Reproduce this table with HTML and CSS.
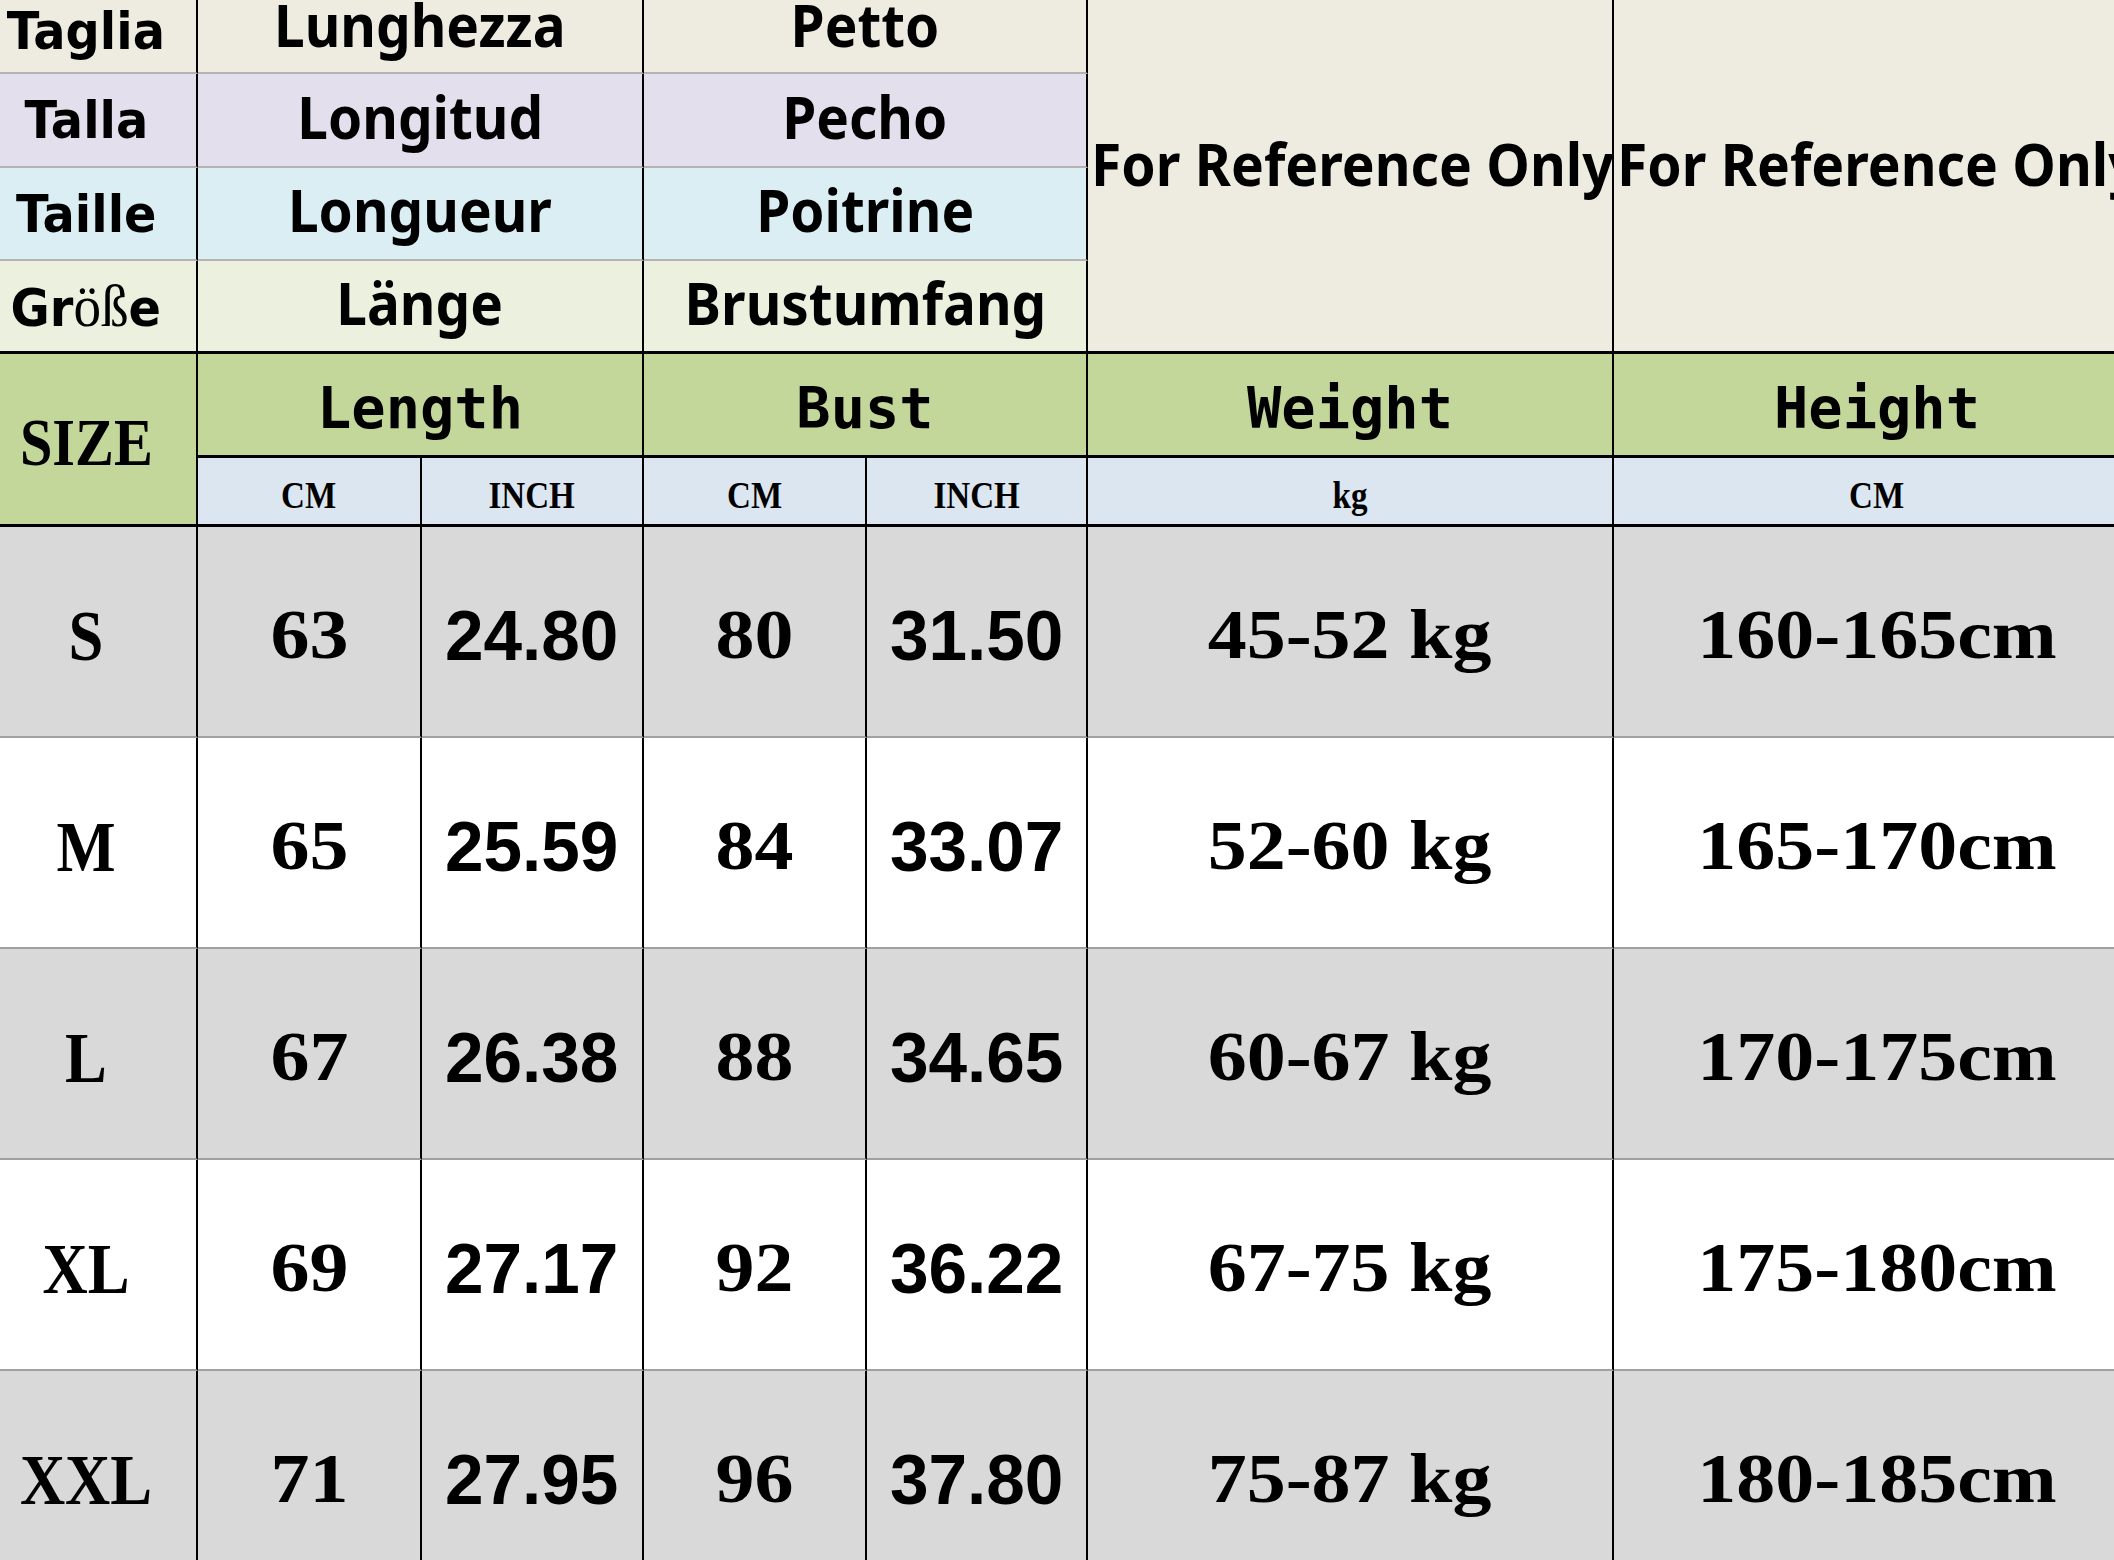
FILE: index.html
```html
<!DOCTYPE html>
<html lang="en">
<head>
<meta charset="utf-8">
<title>Size Chart</title>
<link rel="stylesheet" href="styles.css">
</head>
<body>
<div class="chart">
  <div class="c lang l1 c1"><span class="lbl">Taglia</span></div>
  <div class="c lang l1 span2"><span class="ml">Lunghezza</span></div>
  <div class="c lang l1 span2"><span class="ml">Petto</span></div>
  <div class="c ref col6"><span class="reft">For Reference Only</span></div>
  <div class="c ref col7 last"><span class="reft">For Reference Only</span></div>

  <div class="c lang l2 c1"><span class="lbl">Talla</span></div>
  <div class="c lang l2 span2"><span class="ml">Longitud</span></div>
  <div class="c lang l2 span2"><span class="ml">Pecho</span></div>

  <div class="c lang l3 c1"><span class="lbl">Taille</span></div>
  <div class="c lang l3 span2"><span class="ml">Longueur</span></div>
  <div class="c lang l3 span2"><span class="ml">Poitrine</span></div>

  <div class="c lang l4 end c1"><span class="lbl">Gr<span class="ser">öß</span>e</span></div>
  <div class="c lang l4 end span2"><span class="ml">Länge</span></div>
  <div class="c lang l4 end span2"><span class="ml">Brustumfang</span></div>

  <div class="c green sizehd"><span class="sz">SIZE</span></div>
  <div class="c green span2"><span class="mono">Length</span></div>
  <div class="c green span2"><span class="mono">Bust</span></div>
  <div class="c green"><span class="mono">Weight</span></div>
  <div class="c green last"><span class="mono">Height</span></div>

  <div class="c sub"><span class="unit">CM</span></div>
  <div class="c sub"><span class="unit">INCH</span></div>
  <div class="c sub"><span class="unit">CM</span></div>
  <div class="c sub"><span class="unit">INCH</span></div>
  <div class="c sub"><span class="unit">kg</span></div>
  <div class="c sub last"><span class="unit">CM</span></div>

  <div class="c d gray"><span class="sz big">S</span></div>
  <div class="c d gray"><span class="num">63</span></div>
  <div class="c d gray"><span class="inch">24.80</span></div>
  <div class="c d gray"><span class="num">80</span></div>
  <div class="c d gray"><span class="inch">31.50</span></div>
  <div class="c d gray"><span class="num">45-52 kg</span></div>
  <div class="c d gray last"><span class="num">160-165cm</span></div>

  <div class="c d white"><span class="sz big">M</span></div>
  <div class="c d white"><span class="num">65</span></div>
  <div class="c d white"><span class="inch">25.59</span></div>
  <div class="c d white"><span class="num">84</span></div>
  <div class="c d white"><span class="inch">33.07</span></div>
  <div class="c d white"><span class="num">52-60 kg</span></div>
  <div class="c d white last"><span class="num">165-170cm</span></div>

  <div class="c d gray"><span class="sz big">L</span></div>
  <div class="c d gray"><span class="num">67</span></div>
  <div class="c d gray"><span class="inch">26.38</span></div>
  <div class="c d gray"><span class="num">88</span></div>
  <div class="c d gray"><span class="inch">34.65</span></div>
  <div class="c d gray"><span class="num">60-67 kg</span></div>
  <div class="c d gray last"><span class="num">170-175cm</span></div>

  <div class="c d white"><span class="sz big">XL</span></div>
  <div class="c d white"><span class="num">69</span></div>
  <div class="c d white"><span class="inch">27.17</span></div>
  <div class="c d white"><span class="num">92</span></div>
  <div class="c d white"><span class="inch">36.22</span></div>
  <div class="c d white"><span class="num">67-75 kg</span></div>
  <div class="c d white last"><span class="num">175-180cm</span></div>

  <div class="c d gray"><span class="sz big">XXL</span></div>
  <div class="c d gray"><span class="num">71</span></div>
  <div class="c d gray"><span class="inch">27.95</span></div>
  <div class="c d gray"><span class="num">96</span></div>
  <div class="c d gray"><span class="inch">37.80</span></div>
  <div class="c d gray"><span class="num">75-87 kg</span></div>
  <div class="c d gray last"><span class="num">180-185cm</span></div>
</div>
</body>
</html>
```
FILE: styles.css
```css
html, body {
  margin: 0;
  padding: 0;
}
body {
  width: 2114px;
  height: 1560px;
  overflow: hidden;
  background: #ffffff;
  color: #000000;
}
.chart {
  display: grid;
  grid-template-columns: 222px 224px 222px 223px 221px 526px 526px;
  grid-template-rows: 74px 94px 93px 93px 104px 69px 211px 211px 211px 211px 211px;
  margin-left: -24px;
  width: 2138px;
}
.c {
  box-sizing: border-box;
  display: flex;
  align-items: center;
  justify-content: center;
  border-right: 2px solid #000;
  white-space: nowrap;
  overflow: visible;
}
.c.last { border-right: none; }
.span2 { grid-column: span 2; }

/* language rows */
.lang { border-bottom: 2px solid #b3b3b3; }
.lang.end { border-bottom: 3px solid #000; }
.l1 { background: #eeece1; }
.l2 { background: #e4dfec; }
.l3 { background: #daeef3; }
.l4 { background: #ebf1de; }

.lbl {
  display: inline-block;
  font-family: "DejaVu Sans", Verdana, sans-serif;
  font-weight: bold;
  font-size: 52px;
  transform: scaleX(0.92);
  line-height: 1;
}
.l1 .lbl { margin-bottom: 10px; }
.ser {
  font-family: "Liberation Serif", "Times New Roman", serif;
  font-weight: normal;
  font-size: 60px;
}
.ml {
  display: inline-block;
  font-family: "Noto Sans", "Open Sans", sans-serif;
  font-weight: bold;
  font-size: 59px;
  line-height: 1;
  transform: scaleX(0.93);
  margin-bottom: 8px;
}
.l1 .ml { margin-bottom: 24px; }

.ref {
  grid-row: 1 / span 4;
  background: #eeece1;
  border-bottom: 3px solid #000;
  justify-content: flex-start;
  padding-left: 3px;
  padding-bottom: 24px;
}
.col6 { grid-column: 6; }
.col7 { grid-column: 7; }
.reft {
  display: inline-block;
  font-family: "Noto Sans", "Open Sans", sans-serif;
  font-weight: bold;
  font-size: 59px;
  line-height: 1;
  transform-origin: left center;
  transform: scaleX(0.935);
}

/* green header */
.green {
  background: #c4d79b;
  border-bottom: 3px solid #000;
  padding-top: 8px;
}
.sizehd { grid-row: span 2; padding-top: 6px; }
.mono {
  font-family: "DejaVu Sans Mono", "Liberation Mono", monospace;
  font-weight: bold;
  font-size: 57px;
  line-height: 1;
}
.sz {
  display: inline-block;
  font-family: "Liberation Serif", "Times New Roman", serif;
  font-weight: bold;
  font-size: 67px;
  line-height: 1;
  transform: scaleX(0.87);
}
.sz.big { font-size: 72px; }

.sub {
  background: #dce6f1;
  border-bottom: 3px solid #000;
  padding-top: 8px;
}
.unit {
  display: inline-block;
  font-family: "Liberation Serif", "Times New Roman", serif;
  font-weight: bold;
  font-size: 38px;
  line-height: 1;
  transform: scaleX(0.87);
}

/* data */
.d { border-bottom: 2px solid #a0a0a0; padding-top: 8px; }
.gray { background: #d9d9d9; }
.white { background: #ffffff; }
.num {
  display: inline-block;
  font-family: "Liberation Serif", "Times New Roman", serif;
  font-weight: bold;
  font-size: 69px;
  line-height: 1;
  transform: scaleX(1.13);
}
.inch {
  display: inline-block;
  font-family: "Liberation Sans", Arial, sans-serif;
  font-weight: bold;
  font-size: 70px;
  line-height: 1;
  transform: scaleX(0.99);
}
```
